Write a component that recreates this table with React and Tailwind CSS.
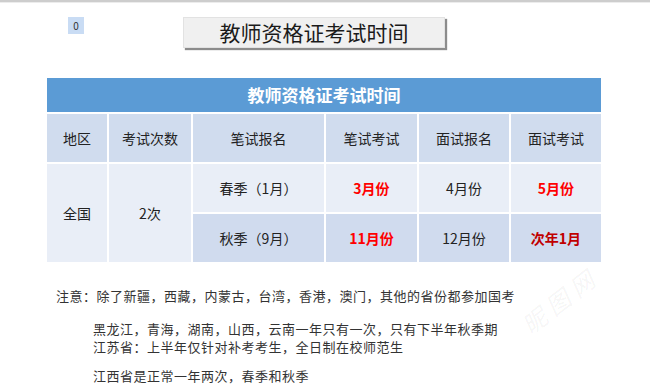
export default function App() {
  const cjk = { fontFamily: '"Noto Sans CJK SC", "Noto Sans", sans-serif' };

  const head = ['地区', '考试次数', '笔试报名', '笔试考试', '面试报名', '面试考试'];

  return (
    <div className="relative w-[650px] h-[390px] bg-white overflow-hidden text-[#222]" style={cjk}>
      <div className="h-[2px] bg-[#cdcdcd]" />
      <div className="h-px bg-[#ececec]" />

      <div className="flex items-start pt-[14px]">
        <div className="ml-[68px] w-[16px] h-[17px] bg-[#c9dcf4] text-[10px] leading-[17px] text-center text-[#333]">0</div>
        <div className="ml-[99px] w-[262px] h-[31px] bg-[#f0f0f0] border border-[#e2e2e2] shadow-[2px_2px_1px_rgba(0,0,0,0.45)] flex items-center justify-center text-[21px] text-[#1a1a1a]">
          教师资格证考试时间
        </div>
      </div>

      <div className="ml-[47px] mt-[30px] w-[554px] flex flex-col gap-[2px] bg-white">
        <div className="h-[34px] bg-[#5b9bd5] flex items-center justify-center text-white text-[17px] font-bold">
          教师资格证考试时间
        </div>
        <div className="grid grid-cols-[60px_82px_131px_91px_90px_90px] grid-rows-[48px_48px_48px] gap-[2px] text-[14px] text-[#222]">
          {head.map((h) => (
            <div key={h} className="bg-[#d0dcee] flex items-center justify-center">{h}</div>
          ))}
          <div className="row-span-2 bg-[#e9eef7] flex items-center justify-center">全国</div>
          <div className="row-span-2 bg-[#e9eef7] flex items-center justify-center">2次</div>

          <div className="bg-[#e9eef7] flex items-center justify-center">春季（1月）</div>
          <div className="bg-[#e9eef7] flex items-center justify-center font-bold text-[#ff0000]">3月份</div>
          <div className="bg-[#e9eef7] flex items-center justify-center">4月份</div>
          <div className="bg-[#e9eef7] flex items-center justify-center font-bold text-[#ff0000]">5月份</div>

          <div className="bg-[#d0dbee] flex items-center justify-center">秋季（9月）</div>
          <div className="bg-[#d0dbee] flex items-center justify-center font-bold text-[#ff0000]">11月份</div>
          <div className="bg-[#d0dbee] flex items-center justify-center">12月份</div>
          <div className="bg-[#d0dbee] flex items-center justify-center font-bold text-[#c00000]">次年1月</div>
        </div>
      </div>

      <div className="mt-[25px] text-[13px] leading-[18px] tracking-[0.5px] text-[#333]">
        <p className="ml-[56px]">注意：除了新疆，西藏，内蒙古，台湾，香港，澳门，其他的省份都参加国考</p>
        <p className="ml-[93px] mt-[15px]">黑龙江，青海，湖南，山西，云南一年只有一次，只有下半年秋季期</p>
        <p className="ml-[93px]">江苏省：上半年仅针对补考考生，全日制在校师范生</p>
        <p className="ml-[93px] mt-[11px]">江西省是正常一年两次，春季和秋季</p>
      </div>

      <div className="absolute left-[515px] top-[282px] -rotate-[38deg] text-[24px] italic text-[#000]/[0.05] tracking-[6px] pointer-events-none">
        昵图网
      </div>
    </div>
  );
}
